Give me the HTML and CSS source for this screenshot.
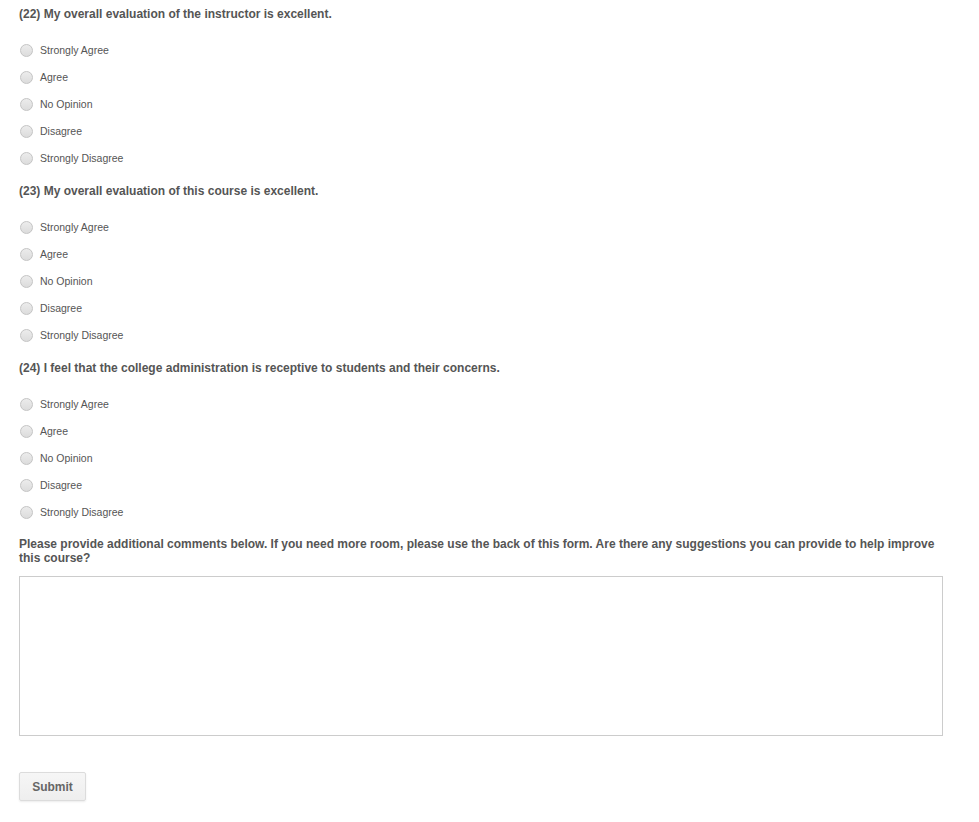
FILE: index.html
```html
<!DOCTYPE html>
<html lang="en">
<head>
<meta charset="UTF-8">
<meta name="viewport" content="width=device-width, initial-scale=1.0">
<title>Course Evaluation</title>
<link rel="stylesheet" href="styles.css">
</head>
<body>
<form class="survey">
	<div class="question">
		<div class="question-title">(22) My overall evaluation of the instructor is excellent.</div>
		<label class="option"><input type="radio" name="q22"> Strongly Agree</label>
		<label class="option"><input type="radio" name="q22"> Agree</label>
		<label class="option"><input type="radio" name="q22"> No Opinion</label>
		<label class="option"><input type="radio" name="q22"> Disagree</label>
		<label class="option"><input type="radio" name="q22"> Strongly Disagree</label>
	</div>

	<div class="question">
		<div class="question-title">(23) My overall evaluation of this course is excellent.</div>
		<label class="option"><input type="radio" name="q23"> Strongly Agree</label>
		<label class="option"><input type="radio" name="q23"> Agree</label>
		<label class="option"><input type="radio" name="q23"> No Opinion</label>
		<label class="option"><input type="radio" name="q23"> Disagree</label>
		<label class="option"><input type="radio" name="q23"> Strongly Disagree</label>
	</div>

	<div class="question">
		<div class="question-title">(24) I feel that the college administration is receptive to students and their concerns.</div>
		<label class="option"><input type="radio" name="q24"> Strongly Agree</label>
		<label class="option"><input type="radio" name="q24"> Agree</label>
		<label class="option"><input type="radio" name="q24"> No Opinion</label>
		<label class="option"><input type="radio" name="q24"> Disagree</label>
		<label class="option"><input type="radio" name="q24"> Strongly Disagree</label>
	</div>

	<div class="comments">
		<div class="comments-title">Please provide additional comments below. If you need more room, please use the back of this form. Are there any suggestions you can provide to help improve this course?</div>
		<textarea class="comments-box"></textarea>
	</div>

	<button type="button" class="submit">Submit</button>
</form>
</body>
</html>
```

FILE: styles.css
```css
body {
	margin: 0;
	background: #fff;
	color: #555;
	font-family: "Liberation Sans", Arial, sans-serif;
}

.survey {
	width: 924px;
	padding: 7px 19px 20px;
}

/* questions */
.question {
	margin-bottom: 13px;
}
.question-title {
	font-size: 12px;
	font-weight: bold;
	line-height: 14px;
	margin-bottom: 15px;
}
.option {
	display: flex;
	align-items: center;
	height: 27px;
	font-size: 10.5px;
	color: #555;
	cursor: pointer;
}
.option input {
	appearance: none;
	-webkit-appearance: none;
	flex: none;
	width: 13px;
	height: 13px;
	margin: 2px 7px 0 1px;
	border: 1px solid #c4c4c4;
	border-radius: 50%;
	background: linear-gradient(to bottom, #ececec, #dcdcdc);
	box-sizing: border-box;
}

/* comments */
.comments-title {
	font-size: 12px;
	font-weight: bold;
	line-height: 14px;
	margin-top: -1px;
	margin-bottom: 11px;
}
.comments-box {
	display: block;
	width: 924px;
	height: 160px;
	box-sizing: border-box;
	border: 1px solid #ccc;
	resize: none;
	margin: 0;
}

.submit {
	margin-top: 36px;
	width: 67px;
	height: 29px;
	font-family: "Liberation Sans", Arial, sans-serif;
	font-size: 12px;
	font-weight: bold;
	color: #666;
	background: linear-gradient(to bottom, #f6f6f6, #eeeeee);
	border: 1px solid #dcdcdc;
	border-radius: 2px;
	box-shadow: 0 1px 2px rgba(0, 0, 0, 0.08);
}
```
